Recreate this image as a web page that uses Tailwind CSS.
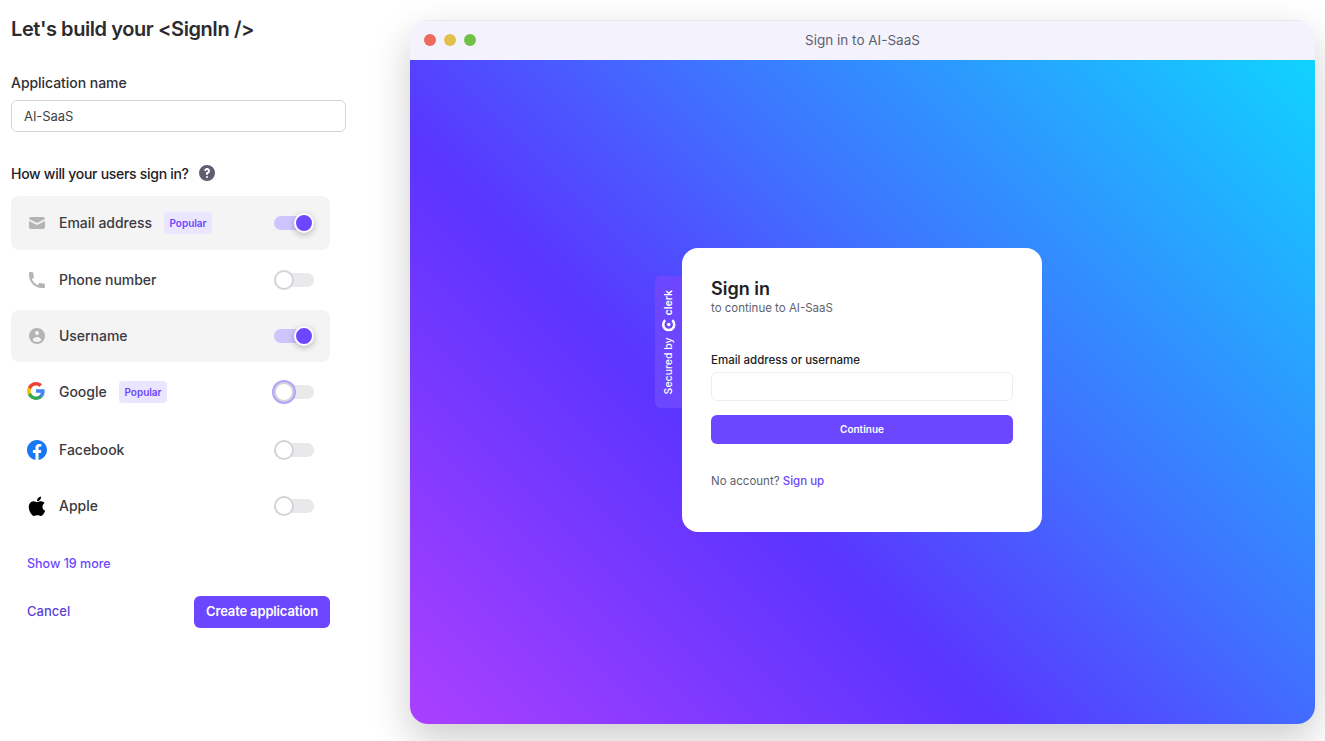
<!DOCTYPE html>
<html lang="en">
<head>
    <meta charset="UTF-8">
    <meta name="viewport" content="width=device-width, initial-scale=1.0">
    <script src="https://cdn.jsdelivr.net/npm/@tailwindcss/browser@4"></script>
    <title>Create application</title>
</head>
<body class="bg-white overflow-hidden font-['Inter',sans-serif] text-[#212126]">
    <div class="flex w-[1325px] h-[741px] pl-[11px]">

        <!-- left form -->
        <div class="w-[335px] shrink-0">
            <h1 class="mt-[16px] h-[26px] text-[20px] leading-[26px] font-semibold tracking-[-0.42px] text-[#2b2b30]">Let's build your &lt;SignIn /&gt;</h1>

            <div class="mt-[31px] text-[14px] leading-[20px] font-[450] tracking-[-0.05px] text-[#2f2f35]">Application name</div>
            <div class="mt-[7px] h-[32px] border border-[#d4d4d8] rounded-md pl-3 text-[13px] leading-[30px] tracking-[-0.05px] text-[#3f3f46]">AI-SaaS</div>

            <div class="mt-[31px] flex items-center gap-[10px] h-[20px] text-[14px] font-medium tracking-[-0.29px]">
                How will your users sign in?
                <svg class="w-[16px] h-[16px] text-[#5e5f6e]" viewBox="2 2 16 16" fill="currentColor"><path fill-rule="evenodd" clip-rule="evenodd" d="M18 10a8 8 0 11-16 0 8 8 0 0116 0zm-8-3a1 1 0 00-.867.5 1 1 0 11-1.731-1A3 3 0 0113 8a3.001 3.001 0 01-2 2.83V11a1 1 0 11-2 0v-1a1 1 0 011-1 1 1 0 100-2zm0 8a1 1 0 100-2 1 1 0 000 2z"/></svg>
            </div>

            <div class="mt-[13px] w-[319px] text-[14px] font-[450] tracking-[-0.03px] text-[#3a3a40]">
                <div class="h-[54px] flex items-center pl-[16px] pr-[16px] bg-[#f4f4f5] rounded-lg">
                    <svg class="w-[20px] h-[20px] text-[#b4b4b4]" viewBox="0 0 20 20" fill="currentColor"><path d="M2.003 5.884L10 9.882l7.997-3.998A2 2 0 0016 4H4a2 2 0 00-1.997 1.884z"/><path d="M18 8.118l-8 4-8-4V14a2 2 0 002 2h12a2 2 0 002-2V8.118z"/></svg>
                    <span class="ml-[12px] -mt-[2px] w-[93px]">Email address</span>
                    <span class="ml-[12px] h-[22px] w-[48px] text-center rounded bg-[#ebe6ff] text-[#6c47ff] text-[10px] leading-[22px] font-semibold">Popular</span>
                    <div class="ml-auto relative w-[40px] h-[14px] rounded-full bg-[#cfc4fe]">
                        <div class="absolute right-0 top-[-3px] w-[20px] h-[20px] rounded-full bg-[#6c47ff] border-2 border-white shadow-[0_2px_6px_rgba(0,0,0,0.25)]"></div>
                    </div>
                </div>
                <div class="h-[60px] flex items-center pl-[16px] pr-[16px]">
                    <svg class="w-[20px] h-[20px] text-[#b4b4b4]" viewBox="0 0 20 20" fill="currentColor"><path d="M2 3a1 1 0 011-1h2.153a1 1 0 01.986.836l.74 4.435a1 1 0 01-.54 1.06l-1.548.773a11.037 11.037 0 006.105 6.105l.774-1.548a1 1 0 011.059-.54l4.435.74a1 1 0 01.836.986V17a1 1 0 01-1 1h-2C7.82 18 2 12.18 2 5V3z"/></svg>
                    <span class="ml-[12px] -mt-[2px]">Phone number</span>
                    <div class="ml-auto relative w-[40px] h-[14px] rounded-full bg-[#e9e9eb]">
                        <div class="absolute left-0 top-[-3px] w-[20px] h-[20px] rounded-full bg-white border-2 border-[#d4d4d8]"></div>
                    </div>
                </div>
                <div class="h-[52px] flex items-center pl-[16px] pr-[16px] bg-[#f4f4f5] rounded-lg">
                    <svg class="w-[20px] h-[20px] text-[#b4b4b4]" viewBox="0 0 20 20" fill="currentColor"><path fill-rule="evenodd" clip-rule="evenodd" d="M18 10a8 8 0 11-16 0 8 8 0 0116 0zm-6-3a2 2 0 11-4 0 2 2 0 014 0zm-2 4a5 5 0 00-4.546 2.916A5.986 5.986 0 0010 16a5.986 5.986 0 004.546-2.084A5 5 0 0010 11z"/></svg>
                    <span class="ml-[12px] -mt-[2px]">Username</span>
                    <div class="ml-auto relative w-[40px] h-[14px] rounded-full bg-[#cfc4fe]">
                        <div class="absolute right-0 top-[-3px] w-[20px] h-[20px] rounded-full bg-[#6c47ff] border-2 border-white shadow-[0_2px_6px_rgba(0,0,0,0.25)]"></div>
                    </div>
                </div>
                <div class="h-[60px] flex items-center pl-[16px] pr-[16px]">
                    <svg class="w-[18px] h-[18px] -mt-[2px] mr-[2px]" viewBox="1 1 22 22"><path fill="#4285F4" d="M22.56 12.25c0-.78-.07-1.53-.2-2.25H12v4.26h5.92c-.26 1.37-1.04 2.53-2.21 3.31v2.77h3.57c2.08-1.92 3.28-4.74 3.28-8.09z"/><path fill="#34A853" d="M12 23c2.97 0 5.46-.98 7.28-2.66l-3.57-2.77c-.98.66-2.23 1.06-3.71 1.06-2.86 0-5.29-1.93-6.16-4.53H2.18v2.84C3.99 20.53 7.7 23 12 23z"/><path fill="#FBBC05" d="M5.84 14.09c-.22-.66-.35-1.36-.35-2.09s.13-1.43.35-2.09V7.07H2.18C1.43 8.55 1 10.22 1 12s.43 3.45 1.18 4.93l2.85-2.22.81-.62z"/><path fill="#EA4335" d="M12 5.38c1.62 0 3.06.56 4.21 1.64l3.15-3.15C17.45 2.09 14.97 1 12 1 7.7 1 3.99 3.47 2.18 7.07l3.66 2.84c.87-2.6 3.3-4.53 6.16-4.53z"/></svg>
                    <span class="ml-[12px] -mt-[2px] w-[48px]">Google</span>
                    <span class="ml-[12px] h-[22px] w-[48px] text-center rounded bg-[#ebe6ff] text-[#6c47ff] text-[10px] leading-[22px] font-semibold">Popular</span>
                    <div class="ml-auto relative w-[40px] h-[14px] rounded-full bg-[#e9e9eb]">
                        <div class="absolute left-0 top-[-3px] w-[20px] h-[20px] rounded-full bg-white border-2 border-[#d4d4d8] shadow-[0_0_0_2px_#b3a3ff]"></div>
                    </div>
                </div>
                <div class="h-[56px] flex items-center pl-[16px] pr-[16px]">
                    <svg class="w-[20px] h-[20px]" viewBox="0 0 24 24"><circle cx="12" cy="12" r="11" fill="#fff"/><path fill="#1877F2" d="M24 12.073c0-6.627-5.373-12-12-12s-12 5.373-12 12c0 5.99 4.388 10.954 10.125 11.854v-8.385H7.078v-3.47h3.047V9.43c0-3.007 1.792-4.669 4.533-4.669 1.312 0 2.686.235 2.686.235v2.953H15.83c-1.491 0-1.956.925-1.956 1.874v2.25h3.328l-.532 3.47h-2.796v8.385C19.612 23.027 24 18.062 24 12.073z"/></svg>
                    <span class="ml-[12px] -mt-[2px]">Facebook</span>
                    <div class="ml-auto relative w-[40px] h-[14px] rounded-full bg-[#e9e9eb]">
                        <div class="absolute left-0 top-[-3px] w-[20px] h-[20px] rounded-full bg-white border-2 border-[#d4d4d8]"></div>
                    </div>
                </div>
                <div class="h-[56px] flex items-center pl-[16px] pr-[16px]">
                    <svg class="w-[20px] h-[20px]" viewBox="3 2.5 18 18.5" fill="#000"><path d="M17.05 20.28c-.98.95-2.05.8-3.08.35-1.09-.46-2.09-.48-3.24 0-1.44.62-2.2.44-3.06-.35C2.79 15.25 3.51 7.59 9.05 7.31c1.35.07 2.29.74 3.08.8 1.18-.24 2.31-.93 3.57-.84 1.51.12 2.65.72 3.4 1.8-3.12 1.87-2.38 5.98.48 7.13-.57 1.5-1.31 2.99-2.54 4.09zM12.03 7.25c-.15-2.23 1.66-4.07 3.74-4.25.29 2.58-2.34 4.5-3.74 4.25z"/></svg>
                    <span class="ml-[12px] -mt-[2px]">Apple</span>
                    <div class="ml-auto relative w-[40px] h-[14px] rounded-full bg-[#e9e9eb]">
                        <div class="absolute left-0 top-[-3px] w-[20px] h-[20px] rounded-full bg-white border-2 border-[#d4d4d8]"></div>
                    </div>
                </div>
            </div>

            <div class="mt-[20px] pl-[16px] h-[20px] text-[12.5px] leading-[20px] font-medium text-[#6c47ff]">Show 19 more</div>

            <div class="mt-[22px] w-[319px] pl-[16px] flex items-center justify-between">
                <span class="text-[13px] font-medium text-[#5b3fd6]">Cancel</span>
                <button class="w-[136px] h-[32px] rounded-md bg-[#6c47ff] text-white text-[13px] font-semibold tracking-[-0.15px]">Create application</button>
            </div>
        </div>

        <!-- preview window -->
        <div class="ml-[64px] mt-[20px] w-[905px] h-[704px] rounded-[18px] overflow-hidden flex flex-col shadow-[0_16px_40px_rgba(0,0,0,0.2)]">
            <div class="h-[40px] shrink-0 bg-[#f4f2fd] flex items-center relative shadow-[inset_0_1px_0_#e9e9ee]">
                <div class="flex gap-[8px] pl-[14px]">
                    <span class="w-[12px] h-[12px] rounded-full bg-[#ed6a5e]"></span>
                    <span class="w-[12px] h-[12px] rounded-full bg-[#e3bf4b]"></span>
                    <span class="w-[12px] h-[12px] rounded-full bg-[#6fc243]"></span>
                </div>
                <div class="absolute inset-0 flex items-center justify-center text-[13.5px] text-[#5e5f6e]">Sign in to AI-SaaS</div>
            </div>

            <div class="flex-1 flex items-center justify-center pb-[4px] pr-[1px] bg-[linear-gradient(45deg,#ab40ff_0%,#5b34ff_37%,#3f72ff_60%,#10d3ff_100%)]">
                <div class="relative w-[360px] h-[284px] bg-white rounded-2xl pl-[29px] pr-[29px] pt-[29px]">
                    <!-- secured by tab sticks out of the card -->
                    <div class="absolute left-[-27px] top-[28px] w-[27px] h-[132px] rounded-l-md bg-[#6c47ff] flex items-center justify-center">
                        <div class="flex items-center text-white text-[10.5px] font-medium [writing-mode:vertical-rl] rotate-180">
                            <span>Secured by</span>
                            <svg class="w-[14px] h-[14px] mt-[6px] rotate-90" viewBox="0 0 24 24" fill="none" stroke="currentColor" stroke-width="4.5"><path d="M19 6A9.5 9.5 0 1 0 19 18"/><circle cx="12" cy="12" r="3" fill="currentColor" stroke="none"/></svg>
                            <span class="mt-[2px] font-semibold text-[10.5px]">clerk</span>
                        </div>
                    </div>

                    <div class="text-[18px] leading-[24px] font-semibold">Sign in</div>
                    <div class="-mt-[1px] text-[11.5px] leading-[16px] text-[#5e5f6e]">to continue to AI-SaaS</div>

                    <div class="mt-[36px] text-[11.5px] leading-[16px] font-medium">Email address or username</div>
                    <div class="mt-[4px] h-[29px] border border-[#eeeef0] rounded-md"></div>
                    <button class="mt-[14px] w-full h-[29px] rounded-md bg-[#6c47ff] text-white text-[10px] font-semibold">Continue</button>
                    <div class="mt-[29px] text-[11.5px] leading-[16px] text-[#5e5f6e]">No account? <span class="text-[#6c47ff] font-medium">Sign up</span></div>
                </div>
            </div>
        </div>
    </div>
</body>
</html>
